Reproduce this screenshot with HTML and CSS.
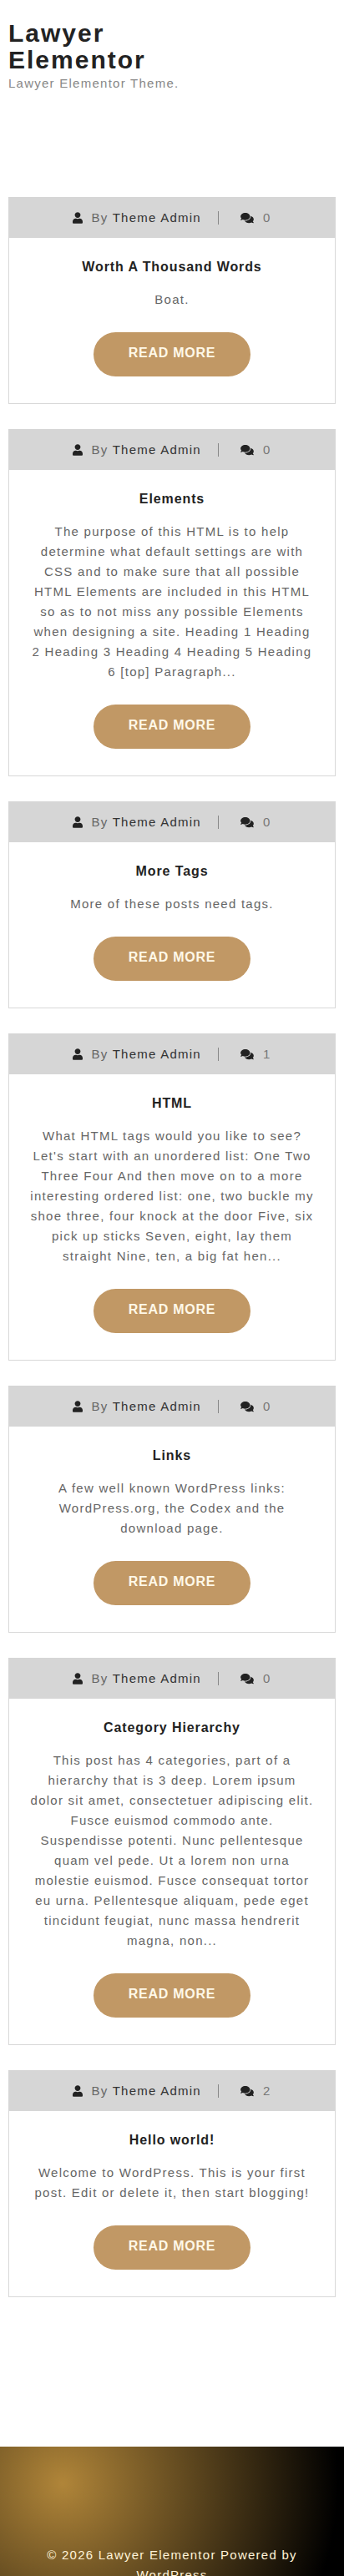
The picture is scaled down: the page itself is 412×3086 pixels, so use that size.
FILE: index.html
```html
<!DOCTYPE html>
<html lang="en">
<head>
    <meta charset="UTF-8">
    <meta name="viewport" content="width=device-width, initial-scale=1.0">
    <title>Lawyer Elementor</title>
    <link rel="stylesheet" href="styles.css">
</head>
<body>
    <svg class="icon-defs" width="0" height="0" aria-hidden="true">
        <symbol id="icon-user" viewBox="0 0 448 512">
            <path d="M224 256c70.7 0 128-57.3 128-128S294.7 0 224 0 96 57.3 96 128s57.3 128 128 128zm89.6 32h-16.7c-22.2 10.2-46.9 16-72.9 16s-50.6-5.8-72.9-16h-16.7C60.2 288 0 348.2 0 422.4V464c0 26.5 21.5 48 48 48h352c26.5 0 48-21.5 48-48v-41.6c0-74.2-60.2-134.4-134.4-134.4z"/>
        </symbol>
        <symbol id="icon-comments" viewBox="0 0 576 512">
            <path d="M416 192c0-88.4-93.1-160-208-160S0 103.6 0 192c0 34.3 14.1 65.9 38 92-13.4 30.2-35.5 54.2-35.8 54.5-2.2 2.3-2.8 5.7-1.5 8.7S4.8 352 8 352c36.6 0 66.9-12.3 88.7-25 32.2 15.7 70.3 25 111.3 25 114.9 0 208-71.6 208-160zm122 220c23.9-26 38-57.7 38-92 0-66.9-53.5-124.2-129.3-148.1.9 6.6 1.3 13.3 1.3 20.1 0 105.9-107.7 192-240 192-10.8 0-21.3-.8-31.7-1.9C207.8 439.6 281.8 480 368 480c41 0 79.1-9.2 111.3-25 21.8 12.7 52.1 25 88.7 25 3.2 0 6.1-1.9 7.3-4.8 1.3-2.9.7-6.3-1.5-8.7-.3-.3-22.4-24.2-35.8-54.5z"/>
        </symbol>
    </svg>

    <header class="site-header">
        <h1 class="site-title">Lawyer Elementor</h1>
        <p class="site-tagline">Lawyer Elementor Theme.</p>
    </header>

    <main class="post-list">
        <article class="post-card">
            <div class="post-meta">
                <svg class="icon-user"><use href="#icon-user"/></svg>
                <span class="meta-text">By <span class="meta-author">Theme Admin</span></span>
                <span class="meta-divider"></span>
                <svg class="icon-comments"><use href="#icon-comments"/></svg>
                <span class="meta-count">0</span>
            </div>
            <div class="post-body">
                <h2 class="post-title">Worth A Thousand Words</h2>
                <p class="post-excerpt">Boat.</p>
                <a class="read-more" href="#">READ MORE</a>
            </div>
        </article>

        <article class="post-card">
            <div class="post-meta">
                <svg class="icon-user"><use href="#icon-user"/></svg>
                <span class="meta-text">By <span class="meta-author">Theme Admin</span></span>
                <span class="meta-divider"></span>
                <svg class="icon-comments"><use href="#icon-comments"/></svg>
                <span class="meta-count">0</span>
            </div>
            <div class="post-body">
                <h2 class="post-title">Elements</h2>
                <p class="post-excerpt">The purpose of this HTML is to help determine what default settings are with CSS and to make sure that all possible HTML Elements are included in this HTML so as to not miss any possible Elements when designing a site. Heading 1 Heading 2 Heading 3 Heading 4 Heading 5 Heading 6 [top] Paragraph...</p>
                <a class="read-more" href="#">READ MORE</a>
            </div>
        </article>

        <article class="post-card">
            <div class="post-meta">
                <svg class="icon-user"><use href="#icon-user"/></svg>
                <span class="meta-text">By <span class="meta-author">Theme Admin</span></span>
                <span class="meta-divider"></span>
                <svg class="icon-comments"><use href="#icon-comments"/></svg>
                <span class="meta-count">0</span>
            </div>
            <div class="post-body">
                <h2 class="post-title">More Tags</h2>
                <p class="post-excerpt">More of these posts need tags.</p>
                <a class="read-more" href="#">READ MORE</a>
            </div>
        </article>

        <article class="post-card">
            <div class="post-meta">
                <svg class="icon-user"><use href="#icon-user"/></svg>
                <span class="meta-text">By <span class="meta-author">Theme Admin</span></span>
                <span class="meta-divider"></span>
                <svg class="icon-comments"><use href="#icon-comments"/></svg>
                <span class="meta-count">1</span>
            </div>
            <div class="post-body">
                <h2 class="post-title">HTML</h2>
                <p class="post-excerpt">What HTML tags would you like to see? Let's start with an unordered list: One Two Three Four And then move on to a more interesting ordered list: one, two buckle my shoe three, four knock at the door Five, six pick up sticks Seven, eight, lay them straight Nine, ten, a big fat hen...</p>
                <a class="read-more" href="#">READ MORE</a>
            </div>
        </article>

        <article class="post-card">
            <div class="post-meta">
                <svg class="icon-user"><use href="#icon-user"/></svg>
                <span class="meta-text">By <span class="meta-author">Theme Admin</span></span>
                <span class="meta-divider"></span>
                <svg class="icon-comments"><use href="#icon-comments"/></svg>
                <span class="meta-count">0</span>
            </div>
            <div class="post-body">
                <h2 class="post-title">Links</h2>
                <p class="post-excerpt">A few well known WordPress links: WordPress.org, the Codex and the download page.</p>
                <a class="read-more" href="#">READ MORE</a>
            </div>
        </article>

        <article class="post-card">
            <div class="post-meta">
                <svg class="icon-user"><use href="#icon-user"/></svg>
                <span class="meta-text">By <span class="meta-author">Theme Admin</span></span>
                <span class="meta-divider"></span>
                <svg class="icon-comments"><use href="#icon-comments"/></svg>
                <span class="meta-count">0</span>
            </div>
            <div class="post-body">
                <h2 class="post-title">Category Hierarchy</h2>
                <p class="post-excerpt">This post has 4 categories, part of a hierarchy that is 3 deep. Lorem ipsum dolor sit amet, consectetuer adipiscing elit. Fusce euismod commodo ante. Suspendisse potenti. Nunc pellentesque quam vel pede. Ut a lorem non urna molestie euismod. Fusce consequat tortor eu urna. Pellentesque aliquam, pede eget tincidunt feugiat, nunc massa hendrerit magna, non...</p>
                <a class="read-more" href="#">READ MORE</a>
            </div>
        </article>

        <article class="post-card">
            <div class="post-meta">
                <svg class="icon-user"><use href="#icon-user"/></svg>
                <span class="meta-text">By <span class="meta-author">Theme Admin</span></span>
                <span class="meta-divider"></span>
                <svg class="icon-comments"><use href="#icon-comments"/></svg>
                <span class="meta-count">2</span>
            </div>
            <div class="post-body">
                <h2 class="post-title">Hello world!</h2>
                <p class="post-excerpt">Welcome to WordPress. This is your first post. Edit or delete it, then start blogging!</p>
                <a class="read-more" href="#">READ MORE</a>
            </div>
        </article>
    </main>

    <footer class="site-footer">
        <p>© 2026 Lawyer Elementor Powered by WordPress</p>
    </footer>
</body>
</html>
```

FILE: styles.css
```css
* {
    margin: 0;
    padding: 0;
    box-sizing: border-box;
}

html {
    height: 3086px;
    overflow: hidden;
}

body {
    background: #fff;
    font-family: "Liberation Sans", Arial, sans-serif;
    letter-spacing: 1.25px;
    color: #666;
}

.icon-defs {
    display: block;
}

.site-header {
    padding: 24px 10px 0;
    height: 236px;
}

.site-title {
    width: 220px;
    font-size: 30px;
    line-height: 32px;
    font-weight: 700;
    letter-spacing: 2px;
    color: #222;
}

.site-tagline {
    font-size: 15px;
    line-height: 24px;
    color: #888;
}

.post-list {
    padding: 0 10px;
    display: flex;
    flex-direction: column;
    gap: 30px;
}

.post-card {
    border: 1px solid #d8d8d8;
    background: #fff;
}

.post-meta {
    height: 49px;
    margin: -1px -1px 0;
    background: #d6d6d6;
    display: flex;
    align-items: center;
    justify-content: center;
    font-size: 15px;
    line-height: 20px;
}

.icon-user {
    width: 12px;
    height: 14px;
    fill: #222;
    margin-right: 10px;
}

.icon-comments {
    width: 16px;
    height: 14px;
    fill: #222;
    margin-right: 11px;
}

.meta-text {
    color: #666;
}

.meta-author {
    color: #333;
}

.meta-divider {
    width: 1px;
    height: 16px;
    background: #888;
    margin: 0 26px 0 20px;
}

.meta-count {
    color: #777;
}

.post-body {
    padding: 23px 25px 32px;
    display: flex;
    flex-direction: column;
    align-items: center;
    text-align: center;
}

.post-title {
    font-size: 16px;
    line-height: 24px;
    font-weight: 700;
    letter-spacing: 0.9px;
    color: #222;
}

.post-excerpt {
    font-size: 15px;
    line-height: 24px;
    margin-top: 15px;
}

.read-more {
    width: 188px;
    height: 53px;
    margin-top: 27px;
    border-radius: 27px;
    background: #c19865;
    color: #fff8e8;
    font-size: 16px;
    font-weight: 700;
    letter-spacing: 0.75px;
    line-height: 49px;
    text-decoration: none;
    text-align: center;
}

.site-footer {
    height: 180px;
    margin-top: 179px;
    padding: 118px 30px 0;
    background: radial-gradient(circle at 75px 44px, #b08539 0, #000 330px);
    text-align: center;
    font-size: 15px;
    line-height: 24px;
    color: #fff3d8;
}
```
